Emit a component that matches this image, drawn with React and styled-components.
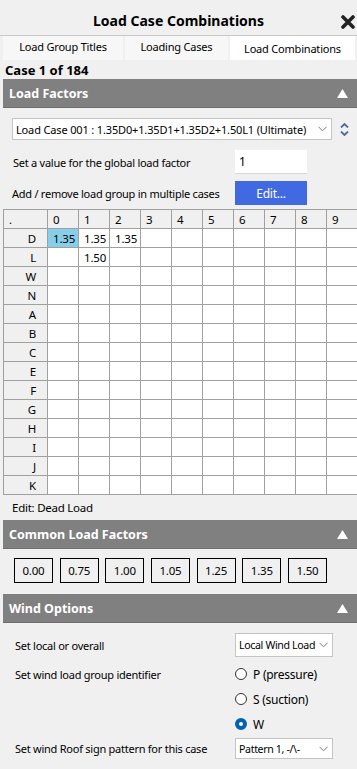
import React from 'react';
import styled, { createGlobalStyle } from 'styled-components';

const GlobalStyle = createGlobalStyle`
  html, body { margin: 0; padding: 0; background: #f0f0f0; }
  body { font-family: "Noto Sans", "Open Sans", sans-serif; font-size: 11px; color: #000; }
`;

const Page = styled.div`
  width: 357px; height: 769px; overflow: hidden;
  background: #f0f0f0;
`;

const TitleBar = styled.div`
  height: 35px; position: relative;
  display: flex; align-items: center; justify-content: center;
  font-size: 14px; font-weight: bold; padding-top: 6px; box-sizing: border-box;
`;

const Close = styled.span`
  position: absolute; right: 2px; top: 14px;
  width: 14px; height: 14px;
`;

const Tabs = styled.div`
  display: flex; height: 26px; border-top: 1px solid #c8c8c8;
  padding-left: 3px; gap: 2px; box-sizing: border-box;
  letter-spacing: -0.2px;
`;

const Tab = styled.div`
  flex: 0 0 ${({w}) => w}px;
  display: flex; justify-content: center;
  align-items: ${({active}) => active ? 'flex-end' : 'center'};
  padding-bottom: ${({active}) => active ? '4px' : '3px'};
  box-sizing: border-box;
  background: ${({active}) => active ? '#fff' : '#f7f7f7'};
  margin-bottom: 1px;
`;

const CaseLabel = styled.div`
  font-size: 13px; font-weight: bold; padding-left: 5px; height: 18px; line-height: 18px;
`;

const Header = styled.div`
  margin-left: 3px; height: 28px; background: #808080;
  border-bottom: 1px solid #6e6e6e;
  display: flex; align-items: center; justify-content: space-between;
  padding: 0 9px 0 6px; color: #fff; font-weight: bold; font-size: 12.5px;
`;

const Body = styled.div`
  padding: ${({pad}) => pad};
  letter-spacing: -0.25px;
`;

const Row = styled.div`
  display: flex; align-items: center; justify-content: space-between;
  height: ${({h}) => h}px;
  margin-top: ${({mt}) => mt || 0}px;
  padding-right: ${({pr}) => pr || 0}px;
`;

const Select = styled.div`
  width: ${({w}) => w}px; height: ${({h}) => h || 22}px; box-sizing: border-box;
  background: #fff; border: 1px solid #c4c4c4;
  display: flex; align-items: center; justify-content: space-between;
  padding: 0 4px 0 3px; white-space: nowrap; overflow: hidden;
  font-size: ${({tight}) => tight ? '10.6px' : '11px'};
  letter-spacing: ${({tight}) => tight ? '-0.35px' : '-0.15px'};
`;

const Chevron = () => (
  <svg width="9" height="6" viewBox="0 0 9 6" style={{ flex: '0 0 auto' }}><path d="M0.5 0.8 L4.5 4.8 L8.5 0.8" fill="none" stroke="#7a7a7a" strokeWidth="1"/></svg>
);

const Spin = styled.div`
  display: flex; flex-direction: column; gap: 3px; margin-left: 6px; margin-right: 8px;
`;

const Label = styled.div`
  padding-left: ${({left}) => left || 0}px;
  margin-top: ${({mt}) => mt || 0}px;
`;

const TextBox = styled.div`
  width: 72px; height: 24px; box-sizing: border-box; background: #fff;
  border-bottom: 1px solid #d8d8d8;
  padding-left: 4px; font-size: 12px; line-height: 24px;
`;

const BlueButton = styled.div`
  width: 72px; height: 24px; background: #4169e1; color: #fff;
  display: flex; align-items: center; justify-content: center; font-size: 12px;
`;

const Grid = styled.div`
  margin: 4px 0 0 3px; width: 360px;
  display: grid; grid-template-columns: 43px repeat(10, 30px);
  grid-auto-rows: 18px; gap: 1px; background: #a0a0a0; border: 1px solid #a0a0a0;
  border-right: none;
`;

const Cell = styled.div`
  background: ${({hl, head}) => hl ? '#87ceeb' : head ? '#f0f0f0' : '#fff'};
  display: flex; align-items: center;
  justify-content: ${({right}) => right ? 'flex-end' : 'flex-start'};
  padding: ${({right}) => right ? '0 11px 0 0' : '0 0 0 5px'};
  font-size: 11.5px; letter-spacing: -0.2px;
`;

const Status = styled.div`
  padding-left: 12px; height: 25px; line-height: 25px; font-size: 11.5px; letter-spacing: -0.25px;
`;

const FactorRow = styled.div`
  display: flex; gap: 6.67px; padding: 9px 0 11px 14px;
`;

const FactorButton = styled.div`
  width: 39px; height: 25px; box-sizing: border-box; border: 1px solid #000;
  display: flex; align-items: center; justify-content: center; font-size: 11.5px;
  letter-spacing: -0.2px;
`;

const RadioGroup = styled.div`
  width: ${({w}) => w}px;
  display: flex; flex-direction: column; gap: 7px;
`;

const RadioItem = styled.div`
  display: flex; align-items: center; gap: 6px; height: 18px; font-size: 12px;
`;

const RadioDot = styled.span`
  width: 12px; height: 12px; border-radius: 50%; box-sizing: border-box;
  border: ${({on}) => on ? '4px solid #0063b1' : '1px solid #333'};
  background: #fff;
`;

const Triangle = () => (
  <svg width="11" height="9" viewBox="0 0 11 9"><path d="M5.5 0 L11 9 L0 9 Z" fill="#fff"/></svg>
);

const SectionHeader = ({ title }) => (
  <Header><span>{title}</span><Triangle /></Header>
);

const cols = ['0','1','2','3','4','5','6','7','8','9'];
const rows = ['D','L','W','N','A','B','C','E','F','G','H','I','J','K'];
const values = { 'D0': '1.35', 'D1': '1.35', 'D2': '1.35', 'L1': '1.50' };
const factors = ['0.00','0.75','1.00','1.05','1.25','1.35','1.50'];

export default function App() {
  return (
    <Page>
      <GlobalStyle />
      <TitleBar>
        Load Case Combinations
        <Close>
          <svg width="14" height="14" viewBox="0 0 14 14"><path d="M2 2 L12 12 M12 2 L2 12" stroke="#222" strokeWidth="3.6" strokeLinecap="round"/></svg>
        </Close>
      </TitleBar>
      <Tabs>
        <Tab w={120}>Load Group Titles</Tab>
        <Tab w={103}>Loading Cases</Tab>
        <Tab w={125} active>Load Combinations</Tab>
      </Tabs>
      <CaseLabel>Case 1 of 184</CaseLabel>

      <SectionHeader title="Load Factors" />
      <Body pad="10px 0 0 12px">
        <Row h={22}>
          <Select w={320}>
            <span>Load Case 001 : 1.35D0+1.35D1+1.35D2+1.50L1 (Ultimate)</span>
            <Chevron />
          </Select>
          <Spin>
            <svg width="9" height="5" viewBox="0 0 9 5"><path d="M1 4.5 L4.5 1 L8 4.5" fill="none" stroke="#4b6b9b" strokeWidth="1.8"/></svg>
            <svg width="9" height="5" viewBox="0 0 9 5"><path d="M1 0.5 L4.5 4 L8 0.5" fill="none" stroke="#4b6b9b" strokeWidth="1.8"/></svg>
          </Spin>
        </Row>
        <Row h={24} mt={10} pr={50}>
          <Label left={1}>Set a value for the global load factor</Label>
          <TextBox>1</TextBox>
        </Row>
        <Row h={24} mt={7} pr={50}>
          <Label>Add / remove load group in multiple cases</Label>
          <BlueButton>Edit...</BlueButton>
        </Row>
      </Body>
      <Grid>
        <Cell head>.</Cell>
        {cols.map(c => <Cell key={c} head>{c}</Cell>)}
        {rows.map(r => (
          <React.Fragment key={r}>
            <Cell head right>{r}</Cell>
            {cols.map(c => <Cell key={c} hl={r + c === 'D0'}>{values[r + c]}</Cell>)}
          </React.Fragment>
        ))}
      </Grid>
      <Status>Edit: Dead Load</Status>

      <SectionHeader title="Common Load Factors" />
      <FactorRow>
        {factors.map(f => <FactorButton key={f}>{f}</FactorButton>)}
      </FactorRow>

      <SectionHeader title="Wind Options" />
      <Body pad="10px 24px 0 15px">
        <Row h={24}>
          <Label>Set local or overall</Label>
          <Select w={98} h={24} tight><span>Local Wind Load</span><Chevron /></Select>
        </Row>
        <Row h={73} mt={8} style={{ alignItems: 'flex-start' }}>
          <Label mt={2}>Set wind load group identifier</Label>
          <RadioGroup w={98}>
            <RadioItem><RadioDot />P (pressure)</RadioItem>
            <RadioItem><RadioDot />S (suction)</RadioItem>
            <RadioItem><RadioDot on />W</RadioItem>
          </RadioGroup>
        </Row>
        <Row h={21}>
          <Label>Set wind Roof sign pattern for this case</Label>
          <Select w={98} h={21} tight><span>Pattern 1, -/\-</span><Chevron /></Select>
        </Row>
      </Body>
    </Page>
  );
}
